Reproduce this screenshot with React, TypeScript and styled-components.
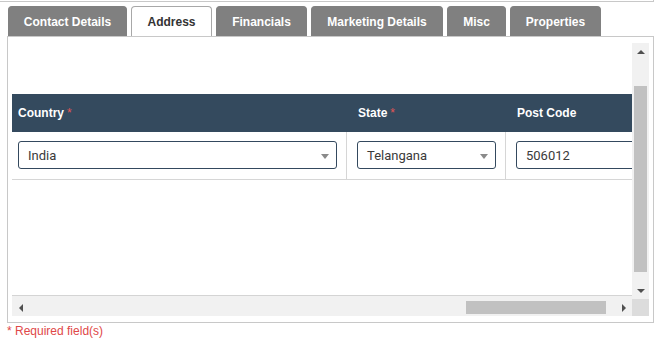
import React from "react";
import styled, { createGlobalStyle } from "styled-components";

const Global = createGlobalStyle`
  html, body { margin: 0; padding: 0; background: #fff; }
  body { font-family: "Liberation Sans", Arial, sans-serif; }
  * { box-sizing: border-box; }
`;

const Page = styled.div`
  width: 660px;
  height: 338px;
  overflow: hidden;
  background: #fff;
`;

const TopStrip = styled.div`
  width: 654px;
  height: 2px;
  border-bottom: 1px solid #c8c8c8;
  border-right: 1px solid #c8c8c8;
`;

const TabBar = styled.div`
  display: flex;
  gap: 4px;
  margin-top: 4px;
  padding-left: 8px;
  height: 30px;
`;

const Tab = styled.div<{ $active?: boolean; $w: number }>`
  width: ${(p) => p.$w}px;
  height: 30px;
  display: flex;
  align-items: center;
  justify-content: center;
  border-radius: 4px 4px 0 0;
  font: bold 12px "Liberation Sans", Arial, sans-serif;
  background: ${(p) => (p.$active ? "#fff" : "#808080")};
  color: ${(p) => (p.$active ? "#333" : "#fff")};
  border: 1px solid ${(p) => (p.$active ? "#a8a8a8" : "#808080")};
  border-bottom: none;
  padding-top: 1px;
`;

const Panel = styled.div`
  margin-left: 7px;
  width: 647px;
  height: 287px;
  border: 1px solid #c8c8c8;
  padding: 6px 4px 6px 4px;
`;

const ScrollBox = styled.div`
  display: grid;
  grid-template-columns: 620px 17px;
  grid-template-rows: 252px 4px 17px;
`;

const Content = styled.div`
  grid-row: 1;
  grid-column: 1;
  overflow: hidden;
  padding-top: 51px;
  background: #fff;
`;

const Table = styled.div`
  width: 680px;
`;

const HeaderRow = styled.div`
  display: grid;
  grid-template-columns: 335px 159px 186px;
  height: 38px;
  background: #344a5e;
`;

const HeadCell = styled.div<{ $first?: boolean }>`
  display: flex;
  align-items: center;
  padding-left: ${(p) => (p.$first ? 6 : 11)}px;
  color: #fff;
  font: bold 12px "Liberation Sans", Arial, sans-serif;
`;

const Req = styled.span`
  color: #e25555;
  font-weight: normal;
  margin-left: 3px;
`;

const BodyRow = styled.div`
  display: grid;
  grid-template-columns: 335px 159px 186px;
  height: 48px;
  border-bottom: 1px solid #d6d6d6;
`;

const Cell = styled.div<{ $first?: boolean; $last?: boolean }>`
  padding: 9px 10px 0 ${(p) => (p.$first ? 6 : 10)}px;
  border-right: ${(p) => (p.$last ? "none" : "1px solid #d6d6d6")};
`;

const Field = styled.div<{ $w: number }>`
  position: relative;
  width: ${(p) => p.$w}px;
  height: 28px;
  border: 1px solid #34495e;
  border-radius: 3px;
  display: flex;
  align-items: center;
  padding-left: 9px;
  font: 13px Roboto, "Liberation Sans", Arial, sans-serif;
  color: #3a3a3a;
  background: #fff;
`;

const Caret = styled.span`
  position: absolute;
  right: 7px;
  top: 12px;
  width: 0;
  height: 0;
  border-left: 4px solid transparent;
  border-right: 4px solid transparent;
  border-top: 5px solid #8a8a8a;
`;

const VScroll = styled.div`
  grid-row: 1 / 3;
  grid-column: 2;
  background: #f1f1f1;
  display: flex;
  flex-direction: column;
`;

const ArrowBtn = styled.div`
  width: 17px;
  height: 17px;
  flex: none;
  display: flex;
  align-items: center;
  justify-content: center;
`;

const Tri = styled.span<{ $dir: "up" | "down" | "left" | "right" }>`
  width: 0;
  height: 0;
  ${(p) =>
    p.$dir === "up"
      ? "border-left:4px solid transparent;border-right:4px solid transparent;border-bottom:4px solid #505050;"
      : p.$dir === "down"
      ? "border-left:4px solid transparent;border-right:4px solid transparent;border-top:4px solid #505050;"
      : p.$dir === "left"
      ? "border-top:4px solid transparent;border-bottom:4px solid transparent;border-right:4px solid #505050;"
      : "border-top:4px solid transparent;border-bottom:4px solid transparent;border-left:4px solid #505050;"}
`;

const VTrack = styled.div`
  flex: 1;
  padding-top: 26px;
  display: flex;
  justify-content: center;
`;

const VThumb = styled.div`
  width: 13px;
  height: 186px;
  background: #c1c1c1;
`;

const HScroll = styled.div`
  grid-row: 2 / 4;
  grid-column: 1;
  border-top: 1px solid #d4d4d4;
  background: #f1f1f1;
  display: flex;
  align-items: flex-end;
`;

const HInner = styled.div`
  display: flex;
  width: 100%;
  height: 17px;
`;

const HTrack = styled.div`
  flex: 1;
  display: flex;
  align-items: center;
  padding-left: 437px;
`;

const HThumb = styled.div`
  width: 140px;
  height: 13px;
  background: #c1c1c1;
`;

const Corner = styled.div`
  grid-row: 3;
  grid-column: 2;
  background: #dcdcdc;
`;

const Note = styled.div`
  padding-left: 7px;
  margin-top: 1px;
  font: 12px "Liberation Sans", Arial, sans-serif;
  line-height: 14px;
  color: #e04848;
`;

const tabs = [
  { label: "Contact Details", w: 119 },
  { label: "Address", w: 81, active: true },
  { label: "Financials", w: 91 },
  { label: "Marketing Details", w: 132 },
  { label: "Misc", w: 59 },
  { label: "Properties", w: 91 },
];

export default function App() {
  return (
    <Page>
      <Global />
      <TopStrip />
      <TabBar>
        {tabs.map((t) => (
          <Tab key={t.label} $w={t.w} $active={t.active}>
            {t.label}
          </Tab>
        ))}
      </TabBar>
      <Panel>
        <ScrollBox>
          <Content>
            <Table>
              <HeaderRow>
                <HeadCell $first>
                  Country<Req>*</Req>
                </HeadCell>
                <HeadCell>
                  State<Req>*</Req>
                </HeadCell>
                <HeadCell>Post Code</HeadCell>
              </HeaderRow>
              <BodyRow>
                <Cell $first>
                  <Field $w={319}>
                    India
                    <Caret />
                  </Field>
                </Cell>
                <Cell>
                  <Field $w={139}>
                    Telangana
                    <Caret />
                  </Field>
                </Cell>
                <Cell $last>
                  <Field $w={160}>506012</Field>
                </Cell>
              </BodyRow>
            </Table>
          </Content>
          <VScroll>
            <ArrowBtn>
              <Tri $dir="up" />
            </ArrowBtn>
            <VTrack>
              <VThumb />
            </VTrack>
            <ArrowBtn>
              <Tri $dir="down" />
            </ArrowBtn>
          </VScroll>
          <HScroll>
            <HInner>
              <ArrowBtn>
                <Tri $dir="left" />
              </ArrowBtn>
              <HTrack>
                <HThumb />
              </HTrack>
              <ArrowBtn>
                <Tri $dir="right" />
              </ArrowBtn>
            </HInner>
          </HScroll>
          <Corner />
        </ScrollBox>
      </Panel>
      <Note>* Required field(s)</Note>
    </Page>
  );
}
